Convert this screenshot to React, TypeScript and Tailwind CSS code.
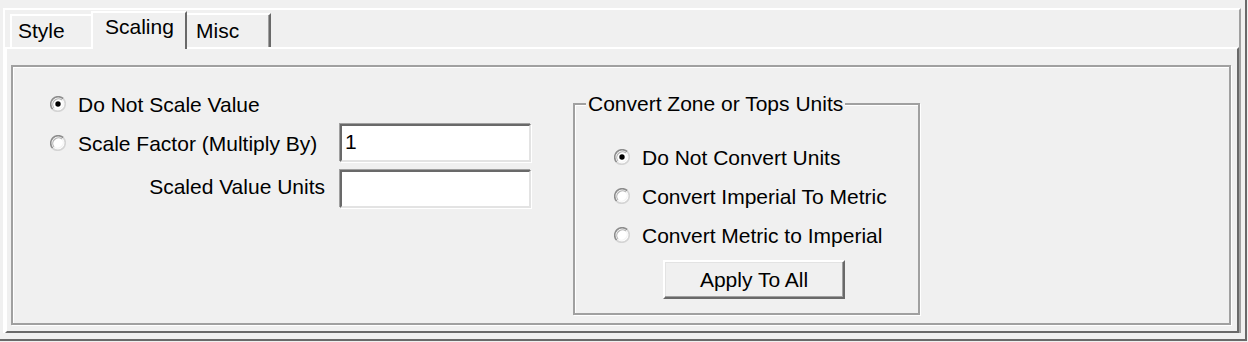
import React from "react"

function Radio({ checked }: { checked?: boolean }) {
    return (
        <svg width="16" height="16" viewBox="0 0 16 16" className="shrink-0">
            <circle cx="8" cy="8" r="6.5" fill="#fff" />
            <path d="M2.7 13.3 A7.5 7.5 0 0 1 13.3 2.7" fill="none" stroke="#8c8c8c" strokeWidth="1.6" />
            <path d="M13.3 2.7 A7.5 7.5 0 0 1 2.7 13.3" fill="none" stroke="#d4d4d4" strokeWidth="1.6" />
            <path d="M4.0 12.0 A5.7 5.7 0 0 1 12.0 4.0" fill="none" stroke="#b4b4b4" strokeWidth="1.2" />
            <path d="M12.0 4.0 A5.7 5.7 0 0 1 4.0 12.0" fill="none" stroke="#f4f4f4" strokeWidth="1.2" />
            {checked && <circle cx="8" cy="8" r="2.7" fill="#000" />}
        </svg>
    )
}

function TextBox({ value }: { value?: string }) {
    return (
        <div className="w-[191px] h-[38px] bg-white border-2 border-t-[#696969] border-l-[#696969] border-b-[#e3e3e3] border-r-[#e3e3e3] shadow-[-1px_-1px_0_#a0a0a0,1px_1px_0_#ffffff] pl-[3px] flex items-center pb-[4px]">
            {value}
        </div>
    )
}

const convertOptions = [
    { label: "Do Not Convert Units", checked: true },
    { label: "Convert Imperial To Metric" },
    { label: "Convert Metric to Imperial" },
]

export default function App() {
    return (
        <div className="w-[1248px] h-[342px] bg-[#f0f0f0] text-[21px] leading-[21px] text-black font-['Liberation_Sans',Arial,sans-serif]">
            <div className="w-[1247px] h-[341px] border-r-2 border-b-2 border-[#696969] pl-[3px] pt-[8px]">
                <div className="w-[1238px] h-[325px] flex flex-col border-t-2 border-l-2 border-r-2 border-t-white border-l-white border-r-[#a0a0a0]">
                    {/* tab strip */}
                    <div className="h-[37px] shrink-0 flex items-end pl-[5px]">
                        <div className="w-[81px] h-[33px] border-t-2 border-l-2 border-white pl-[6px] pt-[4px]">
                            Style
                        </div>
                        <div className="relative z-10 w-[96px] h-[38px] -mb-[2px] bg-[#f0f0f0] border-t-2 border-l-2 border-r-2 border-t-white border-l-white border-r-[#696969] pl-[12px] pt-[3px]">
                            Scaling
                        </div>
                        <div className="w-[84px] h-[34px] border-t-2 border-r-2 border-t-white border-r-[#696969] shadow-[inset_-1px_0_0_#a0a0a0] pl-[9px] pt-[5px]">
                            Misc
                        </div>
                    </div>

                    {/* tab page */}
                    <div className="flex-1 border-2 border-t-white border-l-white border-r-[#696969] border-b-[#696969] pl-[4px] pt-[16px]">
                        <div className="w-[1220px] h-[260px] border-2 border-[#a0a0a0] shadow-[inset_1px_1px_0_#ffffff,1px_1px_0_#ffffff] flex items-start">
                            {/* scale options */}
                            <div className="ml-[37px] mt-[18px] w-[481px] flex flex-col">
                                <div className="h-[38px] flex items-center gap-[12px]">
                                    <Radio checked />
                                    <span>Do Not Scale Value</span>
                                </div>
                                <div className="h-[40px] flex items-center">
                                    <div className="w-[290px] flex items-center gap-[12px]">
                                        <Radio />
                                        <span>Scale Factor (Multiply By)</span>
                                    </div>
                                    <TextBox value="1" />
                                </div>
                                <div className="mt-[6px] h-[40px] flex items-center">
                                    <div className="w-[290px] text-right pr-[15px] pb-[6px]">Scaled Value Units</div>
                                    <TextBox />
                                </div>
                            </div>

                            {/* convert units group */}
                            <div className="relative ml-[42px] mt-[36px] w-[347px] h-[212px] border-2 border-[#a0a0a0] shadow-[inset_1px_1px_0_#ffffff,1px_1px_0_#ffffff] pl-[39px] pt-[33px] flex flex-col gap-[1px]">
                                <span className="absolute -top-[12px] left-[11px] px-[2px] bg-[#f0f0f0]">
                                    Convert Zone or Tops Units
                                </span>
                                {convertOptions.map((o) => (
                                    <div key={o.label} className="h-[38px] flex items-center gap-[12px]">
                                        <Radio checked={o.checked} />
                                        <span>{o.label}</span>
                                    </div>
                                ))}
                                <button className="mt-[5px] ml-[49px] w-[182px] h-[39px] bg-[#f0f0f0] border-2 border-t-white border-l-white border-r-[#696969] border-b-[#696969] shadow-[inset_-1px_-1px_0_#a0a0a0,inset_1px_1px_0_#e3e3e3] flex items-center justify-center pb-[1px]">
                                    Apply To All
                                </button>
                            </div>
                        </div>
                    </div>
                </div>
            </div>
        </div>
    )
}
